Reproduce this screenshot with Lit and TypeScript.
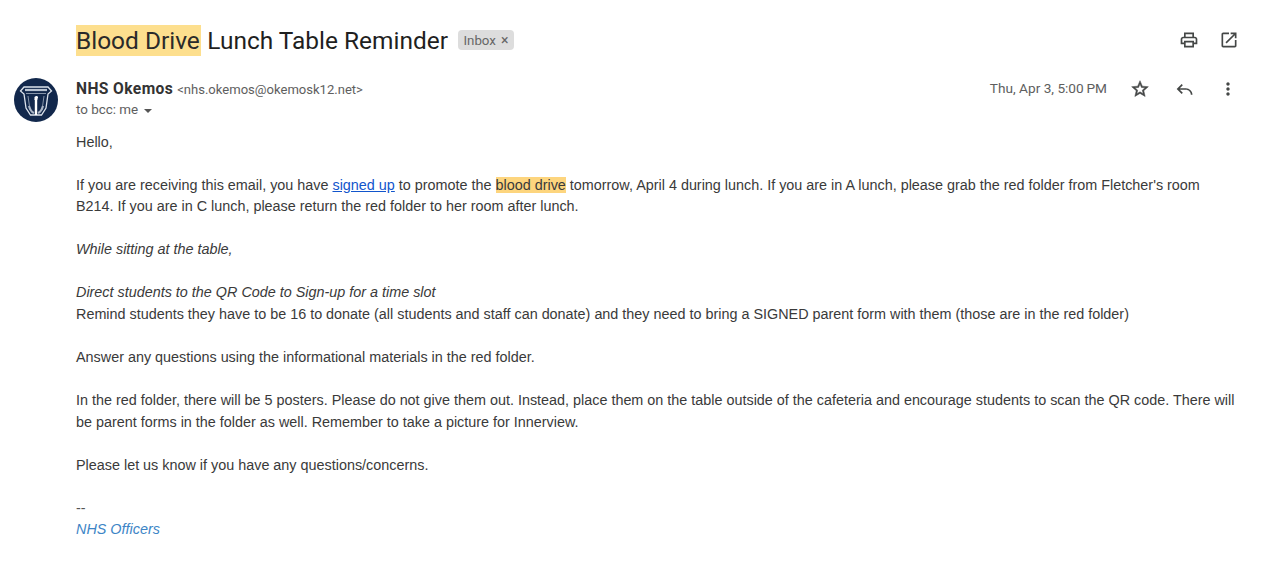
import { LitElement, html, css } from "lit";
import { customElement } from "lit/decorators.js";

@customElement("app-root")
export class AppRoot extends LitElement {
  static styles = css`
    :host { display: block; width: 1280px; height: 571px; overflow: hidden; background: #fff; font-family: "Liberation Sans", Arial, sans-serif; color: #3a3a3a; }
    .subject-row { display: flex; align-items: center; height: 78px; padding: 2px 41px 0 76px; box-sizing: border-box; }
    .subject { font-family: Roboto, "Noto Sans", sans-serif; font-size: 24.45px; line-height: 31px; color: #1f1f1f; white-space: nowrap; }
    .subject mark { background: #fddf8e; display: inline-block; padding-right: 1.5px; color: #2a2a2a; }
    .chip { display: inline-flex; align-items: center; gap: 5px; margin-left: 10.5px; height: 20px; width: 56px; box-sizing: border-box; padding: 0 4px 0 5px; background: #dddddd; border-radius: 4px; font-family: Roboto, sans-serif; font-size: 13.3px; color: #666; }
    .chip span { font-size: 14px; color: #666; line-height: 1; }
    .top-icons { margin-left: auto; display: flex; gap: 20px; }
    .top-icons svg, .acts svg { display: block; fill: #444746; }
    .acts .star { margin-right: 2px; stroke: #444746; stroke-width: 0.6px; }
    .msg { display: flex; padding: 0 0 0 14px; }
    .avatar { flex: none; width: 44px; height: 44px; margin-right: 18px; }
    .main { flex: 1; min-width: 0; padding-right: 42px; }
    .head { display: flex; justify-content: space-between; height: 44px; }
    .sender { font-family: Roboto, sans-serif; font-size: 15.6px; letter-spacing: 0.4px; line-height: 20px; font-weight: 700; color: #333; display: flex; align-items: baseline; margin-top: 1px; }
    .sender small { font-weight: 400; letter-spacing: 0; font-size: 13.05px; color: #5e5e5e; margin-left: 4px; }
    .to { font-family: Roboto, sans-serif; font-size: 13.4px; line-height: 18px; color: #5e5e5e; margin-top: 1px; display: flex; align-items: center; }
    .caret { width: 0; height: 0; border-left: 4.5px solid transparent; border-right: 4.5px solid transparent; border-top: 4.5px solid #555; margin: 2px 0 0 6px; }
    .right { display: flex; align-items: flex-start; }
    .date { font-family: Roboto, sans-serif; font-size: 13.65px; line-height: 20px; color: #5e5e5e; margin-right: 23px; }
    .acts { display: flex; gap: 23px; margin-top: 1px; }
    .body { font-size: 14.39px; line-height: 21.53px; color: #3a3a3a; margin-top: 9.8px; width: 1162px; }
    .body p { margin: 0 0 21.53px; }
    mark.hl { background: #fdd57e; color: inherit; }
    a { color: #1155cc; text-decoration: underline; }
    .sig { color: #555; }
    .sig em { display: block; color: #3d85c6; }
  `;

  render() {
    return html`
      <div class="subject-row">
        <div class="subject"><mark>Blood Drive</mark> Lunch Table Reminder</div>
        <div class="chip">Inbox <span>×</span></div>
        <div class="top-icons">
          <svg width="20" height="20" viewBox="0 0 24 24"><path d="M19 8h-1V3H6v5H5c-1.66 0-3 1.34-3 3v6h4v4h12v-4h4v-6c0-1.66-1.34-3-3-3zM8 5h8v3H8V5zm8 14H8v-4h8v4zm4-4h-2v-2H6v2H4v-4c0-.55.45-1 1-1h14c.55 0 1 .45 1 1v4z"/></svg>
          <svg width="20" height="20" viewBox="0 0 24 24"><path d="M19 19H5V5h7V3H5c-1.1 0-2 .9-2 2v14c0 1.1.9 2 2 2h14c1.1 0 2-.9 2-2v-7h-2v7zM14 3v2h3.59l-9.83 9.83 1.41 1.41L19 6.41V10h2V3h-7z"/></svg>
        </div>
      </div>
      <div class="msg">
        <svg class="avatar" viewBox="0 0 44 44">
          <circle cx="22" cy="22" r="22" fill="#12284c"/>
          <path d="M10 9h24l3.500 4-3.500 3-2 14-4.500 7h-11L12 30l-2-14-3.500-3z" fill="none" stroke="#dde3ec" stroke-width="1.300"/>
          <path d="M11 12h22" stroke="#b9c3d1" stroke-width="2.200"/>
          <path d="M12 15.500h20M14 18l2 14M30 18l-2 14" stroke="#8795aa" stroke-width="1" fill="none"/>
          <path d="M22 21v16" stroke="#fff" stroke-width="2.400"/>
          <path d="M20.500 19c1.500-1.500 3.500-1 3.500.5l-.8 2.500h-2.700z" fill="#fff"/>
          <path d="M15 28c1 3.500 2.500 6 5 7M29 28c-1 3.500-2.500 6-5 7" fill="none" stroke="#aab5c6" stroke-width="2.200"/>
        </svg>
        <div class="main">
          <div class="head">
            <div>
              <div class="sender">NHS Okemos <small>&lt;nhs.okemos@okemosk12.net&gt;</small></div>
              <div class="to">to bcc: me <span class="caret"></span></div>
            </div>
            <div class="right">
              <div class="date">Thu, Apr 3, 5:00&#8201;PM</div>
              <div class="acts">
                <svg class="star" width="20" height="20" viewBox="0 0 24 24"><path d="M22 9.240l-7.190-.62L12 2 9.190 8.630 2 9.240l5.460 4.730L5.820 21 12 17.270 18.180 21l-1.630-7.030L22 9.240zM12 15.400l-3.760 2.270 1-4.280-3.320-2.880 4.380-.38L12 6.100l1.710 4.040 4.380.38-3.320 2.880 1 4.280L12 15.400z"/></svg>
                <svg width="20" height="20" viewBox="0 0 24 24"><path d="M9.400 7.400 8 6l-6 6 6 6 1.400-1.400L5.800 13H13c3.300 0 6 2.700 6 6h2c0-4.400-3.600-8-8-8H5.800z"/></svg>
                <svg width="20" height="20" viewBox="0 0 24 24"><path d="M12 8c1.100 0 2-.9 2-2s-.9-2-2-2-2 .9-2 2 .9 2 2 2zm0 2c-1.100 0-2 .9-2 2s.9 2 2 2 2-.9 2-2-.9-2-2-2zm0 6c-1.100 0-2 .9-2 2s.9 2 2 2 2-.9 2-2-.9-2-2-2z"/></svg>
              </div>
            </div>
          </div>
          <div class="body">
            <p>Hello,</p>
            <p>If you are receiving this email, you have <a href="#">signed up</a> to promote the <mark class="hl">blood drive</mark> tomorrow, April 4 during lunch. If you are in A lunch, please grab the red folder from Fletcher's room B214. If you are in C lunch, please return the red folder to her room after lunch.</p>
            <p><em>While sitting at the table,</em></p>
            <p><em>Direct students to the QR Code to Sign-up for a time slot</em><br>Remind students they have to be 16 to donate (all students and staff can donate) and they need to bring a SIGNED parent form with them (those are in the red folder)</p>
            <p>Answer any questions using the informational materials in the red folder.</p>
            <p>In the red folder, there will be 5 posters. Please do not give them out. Instead, place them on the table outside of the cafeteria and encourage students to scan the QR code. There will be parent forms in the folder as well. Remember to take a picture for Innerview.</p>
            <p>Please let us know if you have any questions/concerns.</p>
            <div class="sig">--<em>NHS Officers</em></div>
          </div>
        </div>
      </div>
    `;
  }
}
